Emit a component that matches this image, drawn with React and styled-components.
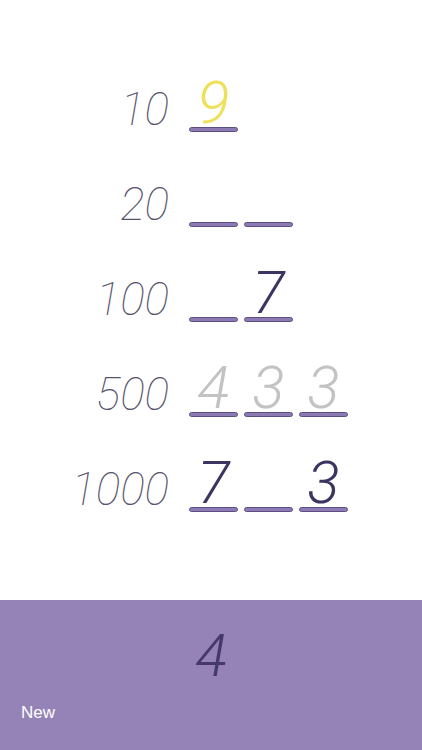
import React from "react";
import styled, { createGlobalStyle } from "styled-components";

const Global = createGlobalStyle`
  html, body {
    margin: 0;
    padding: 0;
    background: #fff;
  }
  body {
    font-family: Roboto, "Liberation Sans", sans-serif;
  }
`;

const Screen = styled.div`
  width: 422px;
  height: 750px;
  display: flex;
  flex-direction: column;
  overflow: hidden;
`;

const Board = styled.div`
  flex: 1;
  display: flex;
  flex-direction: column;
  padding-top: 37px;
`;

const Row = styled.div`
  height: 95px;
  display: flex;
  align-items: flex-end;
`;

const Label = styled.div`
  width: 170px;
  text-align: right;
  font-size: 46px;
  font-weight: 100;
  font-style: italic;
  color: #57536c;
  line-height: 1;
  margin-bottom: 0px;
  padding-right: 1px;
  box-sizing: border-box;
`;

const Slots = styled.div`
  display: flex;
  gap: 6px;
  margin-left: 19px;
`;

const Slot = styled.div`
  width: 49px;
  display: flex;
  flex-direction: column;
  align-items: center;
`;

const tones = {
  yellow: { color: "#ede15a", weight: 300 },
  dark: { color: "#3e3461", weight: 300 },
  gray: { color: "#c3c3c3", weight: 300 },
};

const Digit = styled.div`
  height: 60px;
  font-size: 60px;
  line-height: 60px;
  font-style: italic;
  font-weight: ${(p) => (tones[p.$tone] ? tones[p.$tone].weight : 300)};
  color: ${(p) => (tones[p.$tone] ? tones[p.$tone].color : "transparent")};
  margin-bottom: -6px;
`;

const Bar = styled.div`
  width: 49px;
  height: 5px;
  box-sizing: border-box;
  border-radius: 3px;
  background: #8c7bb2;
  border: 1px solid #5c4e84;
`;

const Panel = styled.div`
  height: 150px;
  background: #9583b7;
  display: flex;
  flex-direction: column;
`;

const Current = styled.div`
  text-align: center;
  font-size: 59px;
  font-weight: 300;
  font-style: italic;
  color: #45396b;
  line-height: 1;
  margin-top: 26px;
`;

const NewButton = styled.button`
  align-self: flex-start;
  margin: 18px 0 0 21px;
  padding: 0;
  border: none;
  background: none;
  color: #fff;
  font-family: "Liberation Sans", Arial, sans-serif;
  font-size: 17px;
  font-weight: 400;
  cursor: pointer;
`;

const rows = [
  { label: "10", slots: [{ d: "9", tone: "yellow" }] },
  { label: "20", slots: [{}, {}] },
  { label: "100", slots: [{}, { d: "7", tone: "dark" }] },
  {
    label: "500",
    slots: [
      { d: "4", tone: "gray" },
      { d: "3", tone: "gray" },
      { d: "3", tone: "gray" },
    ],
  },
  {
    label: "1000",
    slots: [{ d: "7", tone: "dark" }, {}, { d: "3", tone: "dark" }],
  },
];

export default function App() {
  return (
    <Screen>
      <Global />
      <Board>
        {rows.map((r) => (
          <Row key={r.label}>
            <Label>{r.label}</Label>
            <Slots>
              {r.slots.map((s, i) => (
                <Slot key={i}>
                  <Digit $tone={s.tone}>{s.d || "\u00a0"}</Digit>
                  <Bar />
                </Slot>
              ))}
            </Slots>
          </Row>
        ))}
      </Board>
      <Panel>
        <Current>4</Current>
        <NewButton>New</NewButton>
      </Panel>
    </Screen>
  );
}
